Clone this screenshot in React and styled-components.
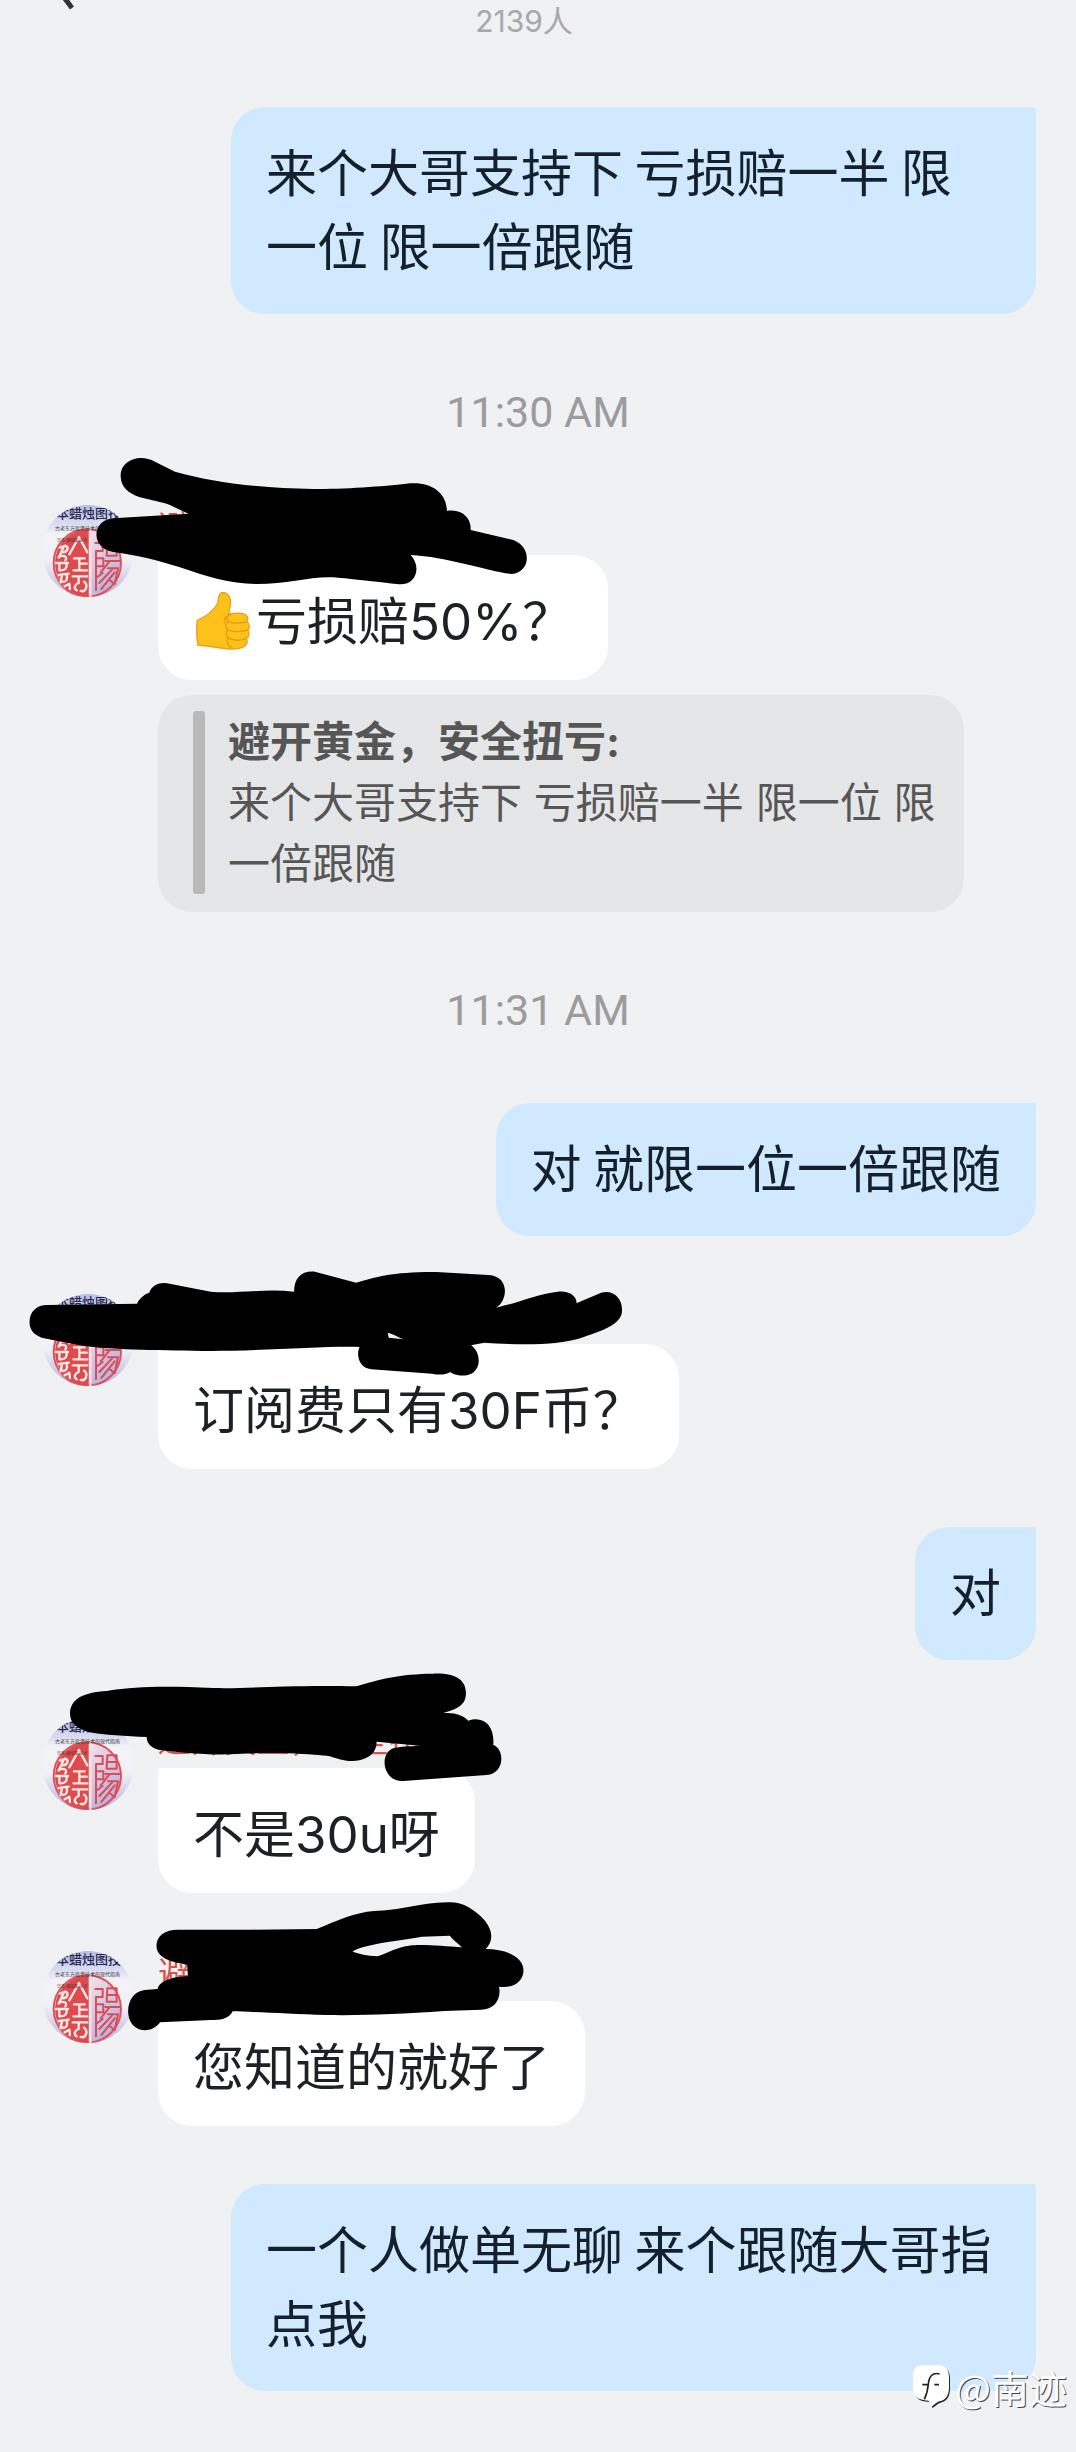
import React from "react";
import styled, { createGlobalStyle } from "styled-components";

const GlobalStyle = createGlobalStyle`
  * { box-sizing: border-box; }
  body {
    margin: 0;
    background: #eff1f3;
    color: #16212b;
    font-family: Inter, "Noto Sans CJK SC", sans-serif;
  }
  p, h1, blockquote { margin: 0; font-weight: 400; }
`;

const Page = styled.main`
  position: relative;
  display: flex;
  flex-direction: column;
  gap: 58px;
  padding-bottom: 58px;
`;

const Header = styled.header`
  display: flex;
  height: 49px;
  padding-right: 128px;
  overflow: hidden;
`;

const BackButton = styled.button`
  width: 100px;
  height: 49px;
  padding: 0;
  border: 0;
  background: none;
`;

const MemberCount = styled.h1`
  flex: 1;
  text-align: center;
  font-size: 30px;
  line-height: 43px;
  color: #a6a8aa;
`;

const Timestamp = styled.time`
  display: block;
  padding: 10px 0 5px;
  text-align: center;
  font-family: Roboto, sans-serif;
  font-size: 43px;
  line-height: 60px;
  color: #9b9c9e;
`;

const OutgoingRow = styled.article`
  display: flex;
  justify-content: flex-end;
  padding: 0 40px 0 231px;
`;

const IncomingRow = styled.article`
  position: relative;
  display: flex;
  gap: 24px;
  padding: 0 112px 0 42px;
`;

const IncomingBody = styled.div`
  flex: 1;
  min-width: 0;
  display: flex;
  flex-direction: column;
  align-items: flex-start;
`;

const SenderName = styled.div`
  height: 50px;
  font-size: 33px;
  line-height: 45px;
  color: #d9534c;
`;

const Bubble = styled.p`
  padding: ${(p) => (p.$mine ? "26px 35px 33px" : "30px 35px 21px")};
  border-radius: ${(p) => (p.$mine ? "34px 4px 34px 34px" : "4px 34px 34px 34px")};
  background: ${(p) => (p.$mine ? "#d1e9ff" : "#ffffff")};
  color: ${(p) => (p.$mine ? "#14212d" : "#1d2126")};
  font-family: ${(p) => (p.$mine ? '"Noto Sans CJK SC", sans-serif' : 'Inter, "Noto Sans CJK SC", sans-serif')};
  font-size: 51px;
  line-height: 74px;
`;

const ThumbIcon = styled.svg`
  width: 54px;
  height: 58px;
  margin: 0 6px 0 3px;
  vertical-align: -10px;
`;

const Quote = styled.blockquote`
  display: flex;
  gap: 23px;
  margin-top: 15px;
  padding: 16px 26px 18px 35px;
  border-radius: 34px;
  background: #e5e6e8;
  color: #565656;
  font-size: 42px;
  line-height: 61px;
`;

const QuoteBar = styled.span`
  flex: none;
  width: 12px;
  border-radius: 3px;
  background: #b9b9b9;
`;

const QuoteAuthor = styled.strong`
  display: block;
  font-weight: 700;
`;

const AvatarArt = styled.svg`
  flex: none;
  width: 92px;
  height: 92px;
  border-radius: 50%;
`;

const ScribbleArt = styled.svg`
  position: absolute;
  top: -70px;
  left: 0;
  width: 700px;
  height: 200px;
  pointer-events: none;
`;

const Watermark = styled.footer`
  position: absolute;
  right: 9px;
  bottom: 37px;
  display: flex;
  align-items: center;
  gap: 4px;
  color: #ffffff;
  font-family: "Noto Sans CJK SC", sans-serif;
  font-size: 38px;
  font-weight: 400;
  line-height: 50px;
  text-shadow: 1px 1px 0 #444444;
`;

function Avatar() {
  return (
    <AvatarArt viewBox="0 0 92 92" role="img" aria-label="头像">
      <defs>
        <linearGradient id="sky" x1="0" y1="0" x2="0" y2="1">
          <stop offset="0" stopColor="#b9bce6" />
          <stop offset="0.22" stopColor="#dcdff2" />
          <stop offset="0.32" stopColor="#f3f3f7" />
          <stop offset="0.6" stopColor="#f1f0f6" />
          <stop offset="1" stopColor="#b3b0dd" />
        </linearGradient>
        <linearGradient id="half" x1="0" y1="0" x2="1" y2="1">
          <stop offset="0.2" stopColor="#fbe6ea" />
          <stop offset="1" stopColor="#a9a8dc" />
        </linearGradient>
      </defs>
      <rect width="92" height="92" fill="url(#sky)" />
      <text x="1" y="13" fontSize="13" fontWeight="500" fill="#25264f">日本蜡烛图技术</text>
      <g transform="translate(-2 -22) scale(0.3333)" fill="none" strokeLinecap="round" strokeLinejoin="round">
        <circle cx="142" cy="240" r="101" fill="url(#half)" stroke="#e0525a" strokeWidth="6" />
        <path d="M146 139 A101 101 0 0 0 146 341Z" fill="#de4a4d" />
        <path d="M151 142V340" stroke="#fbe3e3" strokeWidth="7" />
        <g stroke="#ffe9e6" strokeWidth="7">
          <path d="M60 194L76 188C88 194 84 206 68 208M72 190L56 224M56 222C72 214 84 222 76 232" />
          <path d="M48 240H84M58 242V262M80 242C82 256 74 262 62 262" />
          <path d="M56 276L86 272M66 276L62 298M80 274C84 290 78 298 68 296M74 310L88 302L90 318" />
          <path d="M88 214L117 162L142 208" />
          <path d="M102 226H134M118 226V262M118 242H140M100 262H142" />
          <path d="M98 280H142M116 282V300C104 304 100 316 110 322M132 296C146 306 138 328 122 324" />
        </g>
        <g stroke="#dd4b55" strokeWidth="6">
          <path d="M166 180H188V204H168M168 206V322M170 226H190V250H170" />
          <path d="M202 178H230V218H200ZM202 198H230M196 234H240M208 236L182 268M204 256H234L224 304L210 292" />
          <path d="M216 260L178 300M224 268L184 318M188 270L172 282" />
        </g>
      </g>
      <text x="13" y="25" fontSize="5" fill="#333333">古老东方投资技术的现代指南</text>
      <text x="15" y="37" fontSize="4" fill="#5d3035">日本 蜡烛图 技术</text>
    </AvatarArt>
  );
}

/* Marker strokes that hide a sender's name; origin is the row's top left. */
const MARKS = {
  first: {
    transform: "translate(30 -65) scale(0.3333)",
    d: "M272 108C272 60 330 40 375 65L435 95C560 130 700 145 850 147C950 148 1080 138 1140 130C1200 125 1250 155 1251 213C1300 205 1325 240 1322 270L1450 300C1505 320 1505 395 1445 402C1380 395 1250 350 1142 345C1175 380 1160 435 1108 433C1040 425 1000 420 925 413C850 405 780 432 680 432C600 432 530 410 450 382C380 360 320 345 250 336C180 325 185 240 250 235L475 221C440 205 420 195 405 190L330 172C295 160 272 140 272 108Z",
  },
  second: {
    transform: "translate(20 -43) scale(0.4337 0.3333)",
    d: "M22 213C22 180 40 162 62 162L270 158C275 140 290 128 298 125C305 100 325 92 345 98L440 122C490 130 560 112 632 122C632 80 650 58 680 62L775 95C820 78 860 62 960 63L1080 72C1130 75 1125 150 1098 170C1150 155 1190 130 1240 122C1270 118 1285 140 1283 157L1340 125C1370 115 1390 145 1388 180C1388 220 1340 240 1300 258C1240 285 1150 282 1070 275L1040 283C1060 300 1065 345 1045 365C1025 380 1000 372 992 363C980 372 965 372 950 368L810 355C780 350 775 310 783 288C700 285 560 300 440 300C330 298 220 297 150 285C110 275 80 268 50 260C30 250 22 235 22 213ZM848 245L850 260L885 265C870 258 860 248 848 245Z",
  },
  third: {
    transform: "translate(30 -219) scale(0.3333)",
    d: "M120 645C120 600 160 580 230 576C330 560 420 562 550 567C650 570 750 558 980 562C1050 540 1110 525 1210 524C1280 522 1308 545 1308 582C1308 620 1280 630 1240 642C1280 640 1300 650 1315 665C1360 650 1395 680 1390 738C1425 750 1425 825 1370 828L1120 846C1060 850 1045 765 1090 748C1110 742 1140 742 1170 740L1040 728C1040 770 1000 788 955 786C920 780 900 770 890 770C820 765 760 758 620 765C540 770 450 760 385 752C360 745 350 730 350 714C290 712 220 708 180 700C140 690 120 670 120 645Z",
  },
  fourth: {
    transform: "translate(30 -62) scale(0.3699 0.3333)",
    d: "M342 170C342 140 365 122 400 122L600 122L775 120C830 95 880 70 930 66C1000 65 1050 42 1130 40C1170 38 1200 60 1230 95C1255 130 1250 160 1232 180C1290 180 1335 205 1334 245C1334 280 1300 300 1268 293C1275 330 1255 362 1220 362L1120 366C1000 375 900 380 800 378C700 375 600 368 548 367C540 385 520 395 490 393L352 400C330 430 300 430 280 410C255 385 260 310 310 303L345 300C350 275 390 262 427 262L425 228C400 220 342 215 342 170ZM872 188C900 165 1000 155 1060 143L1135 140C1145 155 1160 165 1168 175C1120 172 1060 165 1025 170C990 175 960 195 940 202C910 200 890 195 872 188Z",
  },
};

function Scribble({ name }) {
  const mark = MARKS[name];
  return (
    <ScribbleArt viewBox="0 -70 700 200" aria-hidden="true">
      <path d={mark.d} transform={mark.transform} fill="#000000" fillRule="evenodd" />
    </ScribbleArt>
  );
}

function ThumbsUp() {
  return (
    <ThumbIcon viewBox="0 0 160 172" role="img" aria-label="赞">
      <path
        d="M4 84C22 76 50 58 64 34C68 26 64 8 74 3C86 -2 100 8 102 24C104 42 96 56 98 66C112 62 138 60 148 68C156 75 154 84 150 88C160 94 160 108 153 113C160 120 158 134 149 138C155 148 150 158 138 164C124 170 92 169 72 166C50 163 26 158 6 158C1 134 1 106 4 84Z"
        fill="#fcc21b"
        stroke="#e9a117"
        strokeWidth="4"
      />
      <path
        d="M98 66C88 72 82 80 84 92M150 88C134 94 110 94 96 88C86 84 90 70 104 66M153 113C134 119 108 119 94 112C86 106 88 96 94 90M149 138C132 144 110 144 96 136C88 130 88 120 94 113M96 137C88 146 92 158 104 164"
        fill="none"
        stroke="#e59b12"
        strokeWidth="4"
        strokeLinecap="round"
      />
    </ThumbIcon>
  );
}

function Outgoing({ children }) {
  return (
    <OutgoingRow>
      <Bubble $mine>{children}</Bubble>
    </OutgoingRow>
  );
}

function Incoming({ mark, quote, children }) {
  return (
    <IncomingRow>
      <Avatar />
      <IncomingBody>
        <SenderName>避开黄金，安全扭亏</SenderName>
        <Bubble>{children}</Bubble>
        {quote && (
          <Quote>
            <QuoteBar />
            <div>
              <QuoteAuthor>{quote.author}:</QuoteAuthor>
              {quote.text}
            </div>
          </Quote>
        )}
      </IncomingBody>
      <Scribble name={mark} />
    </IncomingRow>
  );
}

export default function App() {
  return (
    <Page lang="zh-CN">
      <GlobalStyle />
      <Header>
        <BackButton type="button" aria-label="返回">
          <svg width="100" height="49" viewBox="0 0 100 49">
            <path d="M60 -8L72 8" fill="none" stroke="#333333" strokeWidth="5" />
          </svg>
        </BackButton>
        <MemberCount>2139人</MemberCount>
      </Header>
      <Outgoing>来个大哥支持下 亏损赔一半 限一位 限一倍跟随</Outgoing>
      <Timestamp>11:30 AM</Timestamp>
      <Incoming
        mark="first"
        quote={{
          author: "避开黄金，安全扭亏",
          text: "来个大哥支持下 亏损赔一半 限一位 限一倍跟随",
        }}
      >
        <ThumbsUp />
        亏损赔50%？
      </Incoming>
      <Timestamp>11:31 AM</Timestamp>
      <Outgoing>对 就限一位一倍跟随</Outgoing>
      <Incoming mark="second">订阅费只有30F币？</Incoming>
      <Outgoing>对</Outgoing>
      <Incoming mark="third">不是30u呀</Incoming>
      <Incoming mark="fourth">您知道的就好了</Incoming>
      <Outgoing>一个人做单无聊 来个跟随大哥指点我</Outgoing>
      <Watermark>
        <svg width="38" height="46" viewBox="0 0 114 138" aria-hidden="true">
          <path d="M34 8H79C103 8 111 22 111 46V72C111 102 99 112 83 116C75 118 69 124 59 132C53 124 55 118 49 114C17 112 4 102 4 76V42C4 18 12 8 34 8Z" fill="#222222" />
          <path d="M30 4H76C100 4 108 18 108 42V68C108 98 96 108 80 112C72 114 66 120 56 128C50 120 52 114 46 110C14 108 0 98 0 72V38C0 14 8 4 30 4Z" fill="#ffffff" />
          <path d="M28 62H46M64 62H78M80 30C58 24 48 38 46 60C44 82 40 94 34 106" fill="none" stroke="#222222" strokeWidth="5" />
        </svg>
        @南迹
      </Watermark>
    </Page>
  );
}
